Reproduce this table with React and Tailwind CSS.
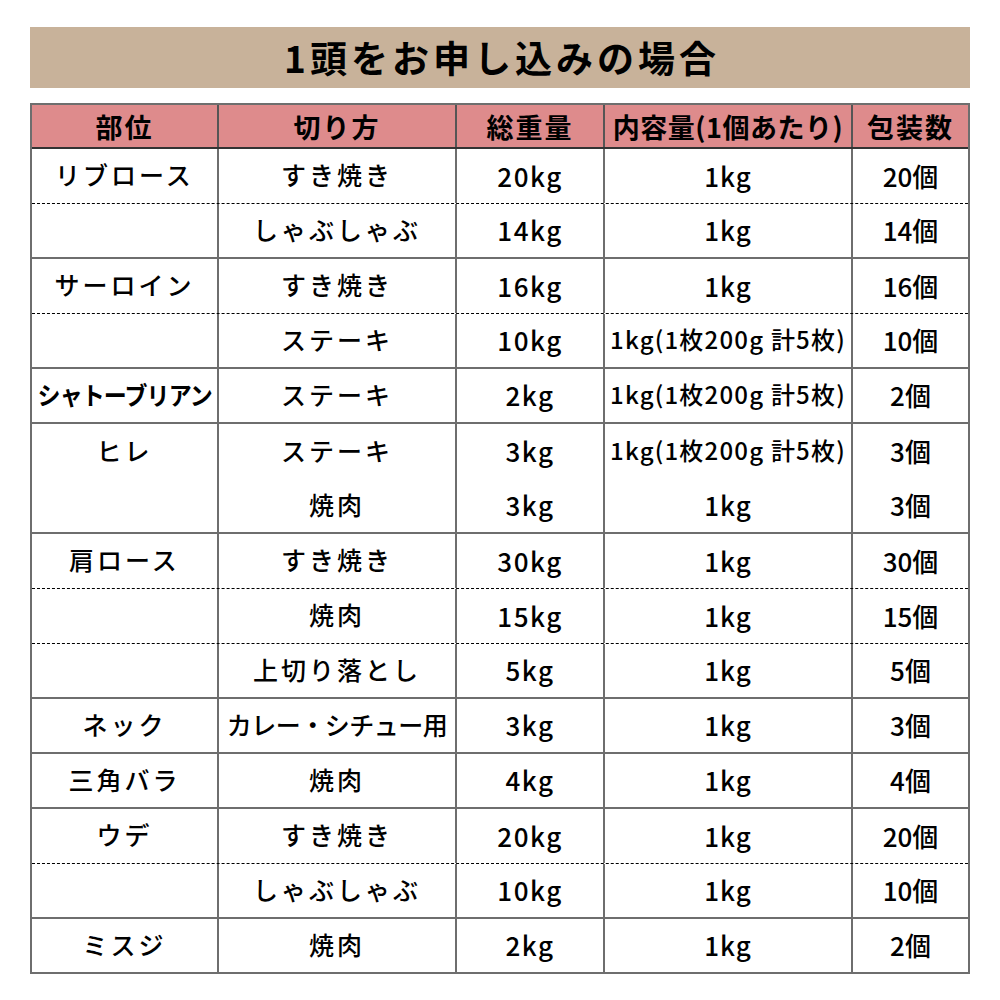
import React from "react";

const rows = [
  { part: "リブロース", cut: "すき焼き", total: "20kg", per: "1kg", qty: "20個", line: "dashed" },
  { part: "", cut: "しゃぶしゃぶ", total: "14kg", per: "1kg", qty: "14個", line: "solid" },
  { part: "サーロイン", cut: "すき焼き", total: "16kg", per: "1kg", qty: "16個", line: "dashed" },
  { part: "", cut: "ステーキ", total: "10kg", per: "1kg(1枚200g 計5枚)", qty: "10個", line: "solid" },
  { part: "シャトーブリアン", cut: "ステーキ", total: "2kg", per: "1kg(1枚200g 計5枚)", qty: "2個", line: "solid", narrow: true },
  { part: "ヒレ", cut: "ステーキ", total: "3kg", per: "1kg(1枚200g 計5枚)", qty: "3個", line: "none" },
  { part: "", cut: "焼肉", total: "3kg", per: "1kg", qty: "3個", line: "solid" },
  { part: "肩ロース", cut: "すき焼き", total: "30kg", per: "1kg", qty: "30個", line: "dashed" },
  { part: "", cut: "焼肉", total: "15kg", per: "1kg", qty: "15個", line: "dashed" },
  { part: "", cut: "上切り落とし", total: "5kg", per: "1kg", qty: "5個", line: "solid" },
  { part: "ネック", cut: "カレー・シチュー用", total: "3kg", per: "1kg", qty: "3個", line: "solid", longCut: true },
  { part: "三角バラ", cut: "焼肉", total: "4kg", per: "1kg", qty: "4個", line: "solid" },
  { part: "ウデ", cut: "すき焼き", total: "20kg", per: "1kg", qty: "20個", line: "dashed" },
  { part: "", cut: "しゃぶしゃぶ", total: "10kg", per: "1kg", qty: "10個", line: "solid" },
  { part: "ミスジ", cut: "焼肉", total: "2kg", per: "1kg", qty: "2個", line: "none" },
];

const lineClass = {
  dashed: "border-b border-dashed border-b-black",
  solid: "border-b-2 border-solid border-b-[#6e6e6e]",
  none: "",
};

export default function App() {
  return (
    <div className="w-[1000px] h-[1000px] bg-white pt-[27px] px-[30px] text-black font-['Noto_Sans_CJK_JP','Noto_Sans',sans-serif]">
      {/* タイトル */}
      <div className="h-[61px] bg-[#c8b29a] flex items-center justify-center">
        <h1 className="text-[37px] font-bold tracking-[4px] leading-none pl-[4px]">1頭をお申し込みの場合</h1>
      </div>

      {/* 表 */}
      <div className="mt-[15px] border-2 border-[#6e6e6e]">
        <div className="grid grid-cols-[187px_238px_148px_248px_1fr] h-[44px] bg-[#de8b8c] border-b-2 border-b-[#333] text-[27px] font-bold leading-none">
          <div className="flex items-center justify-center border-r-2 border-r-[#555] tracking-[2px]">部位</div>
          <div className="flex items-center justify-center border-r-2 border-r-[#555] tracking-[2px]">切り方</div>
          <div className="flex items-center justify-center border-r-2 border-r-[#555] tracking-[2px]">総重量</div>
          <div className="flex items-center justify-center border-r-2 border-r-[#555] whitespace-nowrap tracking-[0.5px]">内容量(1個あたり)</div>
          <div className="flex items-center justify-center tracking-[2px]">包装数</div>
        </div>

        {rows.map((r, i) => (
          <div
            key={i}
            className={`grid grid-cols-[187px_238px_148px_248px_1fr] ${i === rows.length - 1 ? "h-[53px]" : "h-[55px]"} font-medium leading-none ${lineClass[r.line]}`}
          >
            <div className="flex items-center justify-center border-r-2 border-r-[#6e6e6e] whitespace-nowrap pb-[3px]">
              {r.narrow ? (
                <span className="inline-block text-[25px] font-semibold tracking-[-1px] scale-x-[0.92]">{r.part}</span>
              ) : (
                <span className="text-[25px] tracking-[3px]">{r.part}</span>
              )}
            </div>
            <div
              className={`flex items-center justify-center border-r-2 border-r-[#6e6e6e] text-[25px] whitespace-nowrap pb-[3px] ${
                r.longCut ? "tracking-[-0.5px]" : "tracking-[3px]"
              }`}
            >
              {r.cut}
            </div>
            <div className="flex items-center justify-center border-r-2 border-r-[#6e6e6e] text-[26px] tracking-[1.5px] pb-[1px]">
              {r.total}
            </div>
            <div
              className={`flex items-center justify-center border-r-2 border-r-[#6e6e6e] whitespace-nowrap ${
                r.per.length > 4 ? "text-[24px] tracking-[1.2px] pb-[3px]" : "text-[26px] tracking-[1px] pb-[1px]"
              }`}
            >
              {r.per}
            </div>
            <div className="flex items-center justify-center text-[26px] pb-[1px]">{r.qty}</div>
          </div>
        ))}
      </div>
    </div>
  );
}
